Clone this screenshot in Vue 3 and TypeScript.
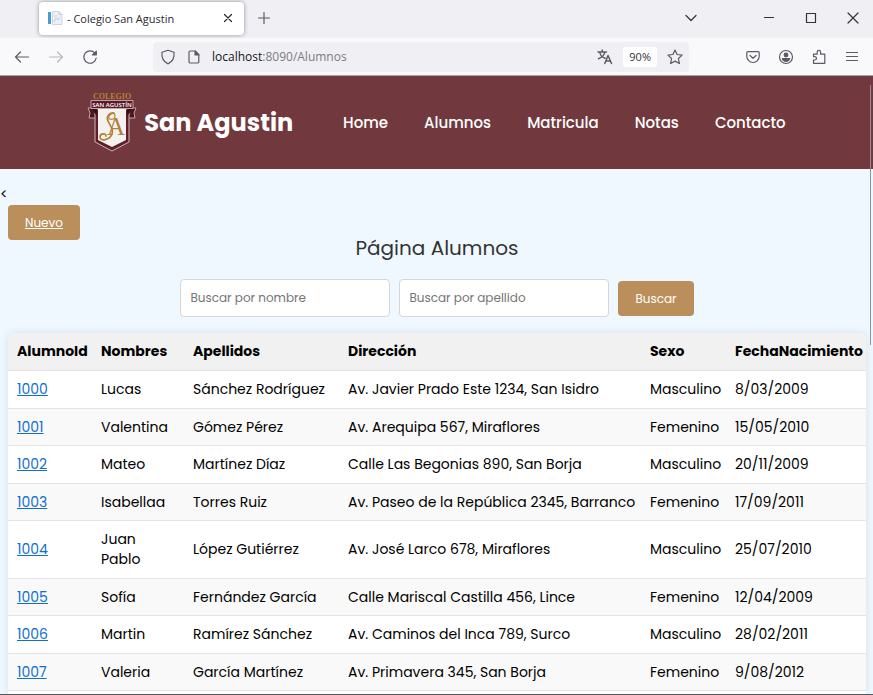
<script setup lang="ts">
import { ref } from 'vue'

interface Alumno {
  id: number
  nombres: string
  apellidos: string
  direccion: string
  sexo: string
  nacimiento: string
}

const links: string[] = ['Home', 'Alumnos', 'Matricula', 'Notas', 'Contacto']
const nombre = ref('')
const apellido = ref('')

const alumnos: Alumno[] = [
  { id: 1000, nombres: 'Lucas', apellidos: 'Sánchez Rodríguez', direccion: 'Av. Javier Prado Este 1234, San Isidro', sexo: 'Masculino', nacimiento: '8/03/2009' },
  { id: 1001, nombres: 'Valentina', apellidos: 'Gómez Pérez', direccion: 'Av. Arequipa 567, Miraflores', sexo: 'Femenino', nacimiento: '15/05/2010' },
  { id: 1002, nombres: 'Mateo', apellidos: 'Martínez Díaz', direccion: 'Calle Las Begonias 890, San Borja', sexo: 'Masculino', nacimiento: '20/11/2009' },
  { id: 1003, nombres: 'Isabellaa', apellidos: 'Torres Ruiz', direccion: 'Av. Paseo de la República 2345, Barranco', sexo: 'Femenino', nacimiento: '17/09/2011' },
  { id: 1004, nombres: 'Juan Pablo', apellidos: 'López Gutiérrez', direccion: 'Av. José Larco 678, Miraflores', sexo: 'Masculino', nacimiento: '25/07/2010' },
  { id: 1005, nombres: 'Sofía', apellidos: 'Fernández García', direccion: 'Calle Mariscal Castilla 456, Lince', sexo: 'Femenino', nacimiento: '12/04/2009' },
  { id: 1006, nombres: 'Martin', apellidos: 'Ramírez Sánchez', direccion: 'Av. Caminos del Inca 789, Surco', sexo: 'Masculino', nacimiento: '28/02/2011' },
  { id: 1007, nombres: 'Valeria', apellidos: 'García Martínez', direccion: 'Av. Primavera 345, San Borja', sexo: 'Femenino', nacimiento: '9/08/2012' },
]
</script>

<template>
  <div class="browser">
    <div class="tabstrip">
      <div class="tab">
        <svg class="favicon" width="16" height="16" viewBox="0 0 16 16">
          <rect x="1" y="2" width="3" height="12" fill="#4a9bd4" />
          <path d="M5.500 1.500h6.500l3 3v10h-9.500z" fill="#edf1f6" stroke="#cfd6df" />
          <path d="M12 1.500v3h3M7 12l2-4 2 2 2-3M7 6h3" fill="none" stroke="#c3ccd8" />
        </svg>
        <span class="tab-title">- Colegio San Agustin</span>
        <button class="icon" aria-label="Cerrar pestaña">
          <svg width="16" height="16" viewBox="0 0 16 16"><path d="M4.500 4.500l7 7M11.500 4.500l-7 7" /></svg>
        </button>
      </div>
      <button class="icon plus" aria-label="Nueva pestaña">
        <svg width="16" height="16" viewBox="0 0 16 16"><path d="M8 2.500v11M2.500 8h11" /></svg>
      </button>
      <div class="window-buttons">
        <button class="icon" aria-label="Listar pestañas">
          <svg width="16" height="16" viewBox="0 0 16 16"><path d="M3 5.500l5 5 5-5" /></svg>
        </button>
        <button class="icon minimize" aria-label="Minimizar">
          <svg width="16" height="16" viewBox="0 0 16 16"><path d="M3.500 7.500h9" /></svg>
        </button>
        <button class="icon" aria-label="Maximizar">
          <svg width="16" height="16" viewBox="0 0 16 16"><path d="M3.500 3.500h9v9h-9z" /></svg>
        </button>
        <button class="icon" aria-label="Cerrar">
          <svg width="16" height="16" viewBox="0 0 16 16"><path d="M3 3l10 10M13 3l-10 10" /></svg>
        </button>
      </div>
    </div>

    <div class="toolbar">
      <div class="history">
        <button class="icon" aria-label="Atrás">
          <svg width="16" height="16" viewBox="0 0 16 16"><path d="M14.500 8h-13M6.500 3l-5 5 5 5" /></svg>
        </button>
        <button class="icon faded" aria-label="Adelante">
          <svg width="16" height="16" viewBox="0 0 16 16"><path d="M1.500 8h13M9.500 3l5 5-5 5" /></svg>
        </button>
        <button class="icon" aria-label="Recargar">
          <svg width="16" height="16" viewBox="0 0 16 16">
            <path d="M14.200 9A6.200 6.200 0 1 1 12.700 3.900" />
            <path d="M14.300 2.200v3.800h-3.800z" class="solid" />
          </svg>
        </button>
      </div>
      <div class="address">
        <svg class="glyph" width="16" height="16" viewBox="0 0 16 16">
          <path d="M8 1.300l6 2c.6 5-1.600 9.400-6 11.600C3.600 12.700 1.400 8.300 2 3.300z" />
        </svg>
        <svg class="glyph" width="16" height="16" viewBox="0 0 16 16">
          <path d="M4.200 2h5l3.600 3.600v7.200a1.200 1.200 0 0 1-1.200 1.200H4.200A1.200 1.200 0 0 1 3 12.800V3.200A1.200 1.200 0 0 1 4.200 2z" />
          <path d="M9 2l4 4H9z" class="solid" />
        </svg>
        <span class="url"><b>localhost</b>:8090/Alumnos</span>
        <svg class="glyph bold" width="16" height="16" viewBox="0 0 16 16">
          <path d="M1 3h8.500M5.200 1v2M2.700 3c.5 3 2.800 5.500 5.300 6.300M7.800 3c-.5 3.200-3 5.600-6.300 6.700M7.800 14.500l3.200-8 3.500 8M9 12h4.400" />
        </svg>
        <span class="zoom">90%</span>
        <button class="icon" aria-label="Añadir a marcadores">
          <svg width="16" height="16" viewBox="0 0 16 16"><path d="M8 1l2.100 4.500 5 .6-3.700 3.400 1 5L8 12.100l-4.400 2.400 1-5L.9 6.100l5-.6z" /></svg>
        </button>
      </div>
      <div class="tools">
        <button class="icon" aria-label="Pocket">
          <svg width="16" height="16" viewBox="0 0 16 16"><path d="M2.800 2.600h10.400a1 1 0 0 1 1 1v3.700a6.200 6.200 0 0 1-12.400 0V3.600a1 1 0 0 1 1-1zM5 6.500l3 2.800 3-2.800" /></svg>
        </button>
        <button class="icon" aria-label="Cuenta">
          <svg width="16" height="16" viewBox="0 0 16 16">
            <circle cx="8" cy="8" r="6.500" />
            <circle cx="8" cy="6" r="1.800" class="solid" />
            <path d="M4.300 9.600h7.400c-.5 1.700-1.900 2.700-3.700 2.700s-3.200-1-3.700-2.700z" class="solid" />
          </svg>
        </button>
        <button class="icon" aria-label="Extensiones">
          <svg width="16" height="16" viewBox="0 0 16 16"><path d="M2.500 14.300V11h1.300a1.700 1.700 0 0 0 0-3.400H2.500V5.200h3.700V3a1.700 1.700 0 0 1 3.400 0v2.200h4.200v9.100z" /></svg>
        </button>
        <button class="icon" aria-label="Menú">
          <svg width="16" height="16" viewBox="0 0 16 16"><path d="M2.500 3.500h11M2.500 7.500h11M2.500 11.500h11" /></svg>
        </button>
      </div>
    </div>

    <div class="page">
      <header class="banner">
        <div class="banner-inner">
          <a class="brand" href="#">
            <svg width="50" height="62" viewBox="0 0 50 62" role="img" aria-label="Colegio San Agustín">
              <text x="25" y="7" class="crest-top" text-anchor="middle">COLEGIO</text>
              <path d="M4 16H1l2 5-1 5h7M46 16h3l-2 5 1 5h-7" fill="#4d1520" stroke="#bda8a9" />
              <path d="M8 17h34v33L25 59 8 50z" fill="#621d29" stroke="#c9b9b9" />
              <path d="M11 17h28v31L25 55l-14-7z" fill="#f4f2ef" />
              <path d="M4 8.500h42v8H4z" fill="#5d1926" stroke="#bda8a9" />
              <path d="M4 17h6v7zM46 17h-6v7z" fill="#3e0e18" />
              <text x="25" y="15" class="crest-name" text-anchor="middle">SAN AGUSTÍN</text>
              <text x="29" y="43" class="crest-letter" text-anchor="middle">A</text>
              <g fill="none" stroke="#b5803a" stroke-linecap="round">
                <path d="M22 27c-1-5 6-8 6-3 0 3-3 4-5 3" stroke-width="1.200" />
                <path d="M27 21c-5-1-8 4-6 8 2 5 6 8 4 13-2 6-12 8-12 3 0-4 6-4 6-1" stroke-width="1.700" />
              </g>
            </svg>
            <span>San Agustin</span>
          </a>
          <nav class="menu">
            <a v-for="link in links" :key="link" href="#">{{ link }}</a>
          </nav>
        </div>
      </header>

      <main class="content">
        <div class="stray">&lt;</div>
        <div class="body">
          <a class="action nuevo" href="#">Nuevo</a>
          <h1>Página Alumnos</h1>
          <form class="search" @submit.prevent>
            <input v-model="nombre" type="text" aria-label="Buscar por nombre" placeholder="Buscar por nombre" />
            <input v-model="apellido" type="text" aria-label="Buscar por apellido" placeholder="Buscar por apellido" />
            <button class="action" type="submit">Buscar</button>
          </form>
          <div class="card">
            <table>
              <colgroup>
                <col class="c-id" />
                <col class="c-nombres" />
                <col class="c-apellidos" />
                <col />
                <col class="c-sexo" />
                <col class="c-fecha" />
              </colgroup>
              <thead>
                <tr>
                  <th>AlumnoId</th>
                  <th>Nombres</th>
                  <th>Apellidos</th>
                  <th>Dirección</th>
                  <th>Sexo</th>
                  <th>FechaNacimiento</th>
                </tr>
              </thead>
              <tbody>
                <tr v-for="a in alumnos" :key="a.id">
                  <td><a href="#">{{ a.id }}</a></td>
                  <td>{{ a.nombres }}</td>
                  <td>{{ a.apellidos }}</td>
                  <td>{{ a.direccion }}</td>
                  <td>{{ a.sexo }}</td>
                  <td>{{ a.nacimiento }}</td>
                </tr>
              </tbody>
            </table>
          </div>
        </div>
      </main>
      <div class="scroll-thumb"></div>
    </div>
  </div>
</template>

<style>
body {
  margin: 0;
}
</style>

<style scoped>
* {
  box-sizing: border-box;
}
.browser {
  display: flex;
  flex-direction: column;
  height: 100vh;
  overflow: hidden;
  border-bottom: 1px solid #55585c;
  font-family: Poppins, Inter, "Liberation Sans", sans-serif;
  color: #000;
}
button {
  font-family: inherit;
  border: 0;
}
.icon {
  display: flex;
  padding: 0;
  background: none;
}
.icon svg,
.glyph {
  flex: none;
  fill: none;
  stroke: #5b5b66;
  stroke-width: 1.2;
  stroke-linejoin: round;
  stroke-linecap: round;
}
.glyph.bold {
  stroke-width: 1.5;
}
.icon .solid,
.glyph .solid {
  fill: #5b5b66;
}
.faded {
  opacity: 0.4;
}

.tabstrip {
  flex: none;
  display: flex;
  align-items: center;
  height: 38px;
  padding: 0 12px 2px 39px;
  background: #f0eff4;
  font-family: "Segoe UI", "Open Sans", sans-serif;
}
.tab {
  display: flex;
  align-items: center;
  gap: 4px;
  width: 205px;
  height: 33px;
  padding: 0 8px;
  border-radius: 4px;
  background: #fff;
  box-shadow: 0 0 4px rgba(0, 0, 0, 0.4);
}
.tab-title {
  flex: 1;
  font-size: 11px;
  color: #2b2a33;
  white-space: nowrap;
}
.tab .icon svg {
  stroke: #2b2a33;
}
.plus {
  margin-left: 12px;
}
.window-buttons {
  display: flex;
  align-items: center;
  gap: 26px;
  margin-left: auto;
}
.window-buttons svg {
  stroke: #33323b;
}
.minimize {
  margin-left: 36px;
}

.toolbar {
  flex: none;
  display: flex;
  align-items: center;
  height: 38px;
  padding: 0 13px 0 14px;
  background: #f9f9fb;
  border-bottom: 1px solid #a9a3a7;
}
.history {
  display: flex;
  gap: 18px;
}
.address {
  display: flex;
  align-items: center;
  flex: 1;
  gap: 10px;
  height: 30px;
  margin: 0 56px 0 55px;
  padding: 0 6px 0 7px;
  border-radius: 4px;
  background: #f0f0f4;
  font-family: "Segoe UI", "Open Sans", sans-serif;
}
.url {
  flex: 1;
  font-size: 12px;
  color: #7c7b85;
}
.url b {
  font-weight: 400;
  color: #15141a;
}
.zoom {
  padding: 0 6px;
  border-radius: 3px;
  background: #fff;
  font-size: 11px;
  line-height: 20px;
  color: #33323b;
}
.tools {
  display: flex;
  gap: 17px;
}

.page {
  position: relative;
  flex: 1;
  display: flex;
  flex-direction: column;
  min-height: 0;
  overflow: hidden;
  background: #f0f8ff;
}
.banner {
  flex: none;
  background: #71393e;
}
.banner-inner {
  display: flex;
  align-items: center;
  justify-content: space-between;
  width: 80%;
  height: 93px;
  margin: 0 auto;
}
.brand {
  display: flex;
  align-items: center;
  gap: 7px;
  color: #fff;
  font-size: 24px;
  font-weight: 700;
  text-decoration: none;
  white-space: nowrap;
}
.crest-top {
  font: 700 8px "Liberation Serif", serif;
  fill: #b5803a;
}
.crest-name {
  font: 600 6px "Open Sans", sans-serif;
  fill: #fff;
}
.crest-letter {
  font: 25px "Liberation Serif", serif;
  fill: #b5803a;
}
.menu {
  display: flex;
  gap: 36px;
}
.menu a {
  color: #fff;
  font-size: 15px;
  font-weight: 500;
  text-decoration: none;
}

.content {
  flex: 1;
  display: flex;
  flex-direction: column;
  padding-top: 14px;
}
.stray {
  font-size: 14px;
  line-height: 22px;
}
.body {
  flex: 1;
  display: flex;
  flex-direction: column;
  padding: 0 7px 0 8px;
}
.action {
  border-radius: 4px;
  padding: 0 17px;
  background: #ba8f5b;
  color: #fff;
  font-size: 12px;
  line-height: 35px;
}
.nuevo {
  align-self: flex-start;
}
h1 {
  margin: 0 0 23px;
  color: #333;
  font-size: 20px;
  font-weight: 400;
  line-height: 16px;
  text-align: center;
}
.search {
  display: flex;
  align-items: center;
  justify-content: center;
  gap: 9px;
}
.search input {
  width: 210px;
  height: 38px;
  padding: 0 9px;
  border: 1px solid #d6d6d6;
  border-radius: 4px;
  background: #fff;
  font-family: inherit;
  font-size: 12px;
}
.search input::placeholder {
  color: #757575;
}
.card {
  flex: 1;
  margin-top: 16px;
  border-radius: 7px 7px 0 0;
  overflow: hidden;
  background: #fff;
  box-shadow: 0 0 9px rgba(0, 0, 0, 0.1);
}
table {
  width: 100%;
  table-layout: fixed;
  border-collapse: separate;
  border-spacing: 0;
  font-size: 14px;
  line-height: 20px;
}
th,
td {
  padding: 8px 0 8px 9px;
  border-bottom: 1px solid #e3e3e3;
  text-align: left;
  white-space: nowrap;
}
td {
  padding-right: 9px;
}
td:nth-child(2) {
  white-space: normal;
}
th {
  padding-bottom: 9px;
  background: #f1f1f1;
  font-weight: 700;
}
tbody tr:nth-child(odd) td {
  padding-bottom: 9px;
}
tbody tr:nth-child(even) {
  background: #f9f9f9;
}
td a {
  color: #0f6fd1;
}
.c-id {
  width: 84px;
}
.c-nombres {
  width: 92px;
}
.c-apellidos {
  width: 155px;
}
.c-sexo {
  width: 85px;
}
.c-fecha {
  width: 140px;
}
.scroll-thumb {
  position: absolute;
  top: 9px;
  right: 2px;
  width: 1px;
  height: 42%;
  background: #8f8f9d;
}
</style>
